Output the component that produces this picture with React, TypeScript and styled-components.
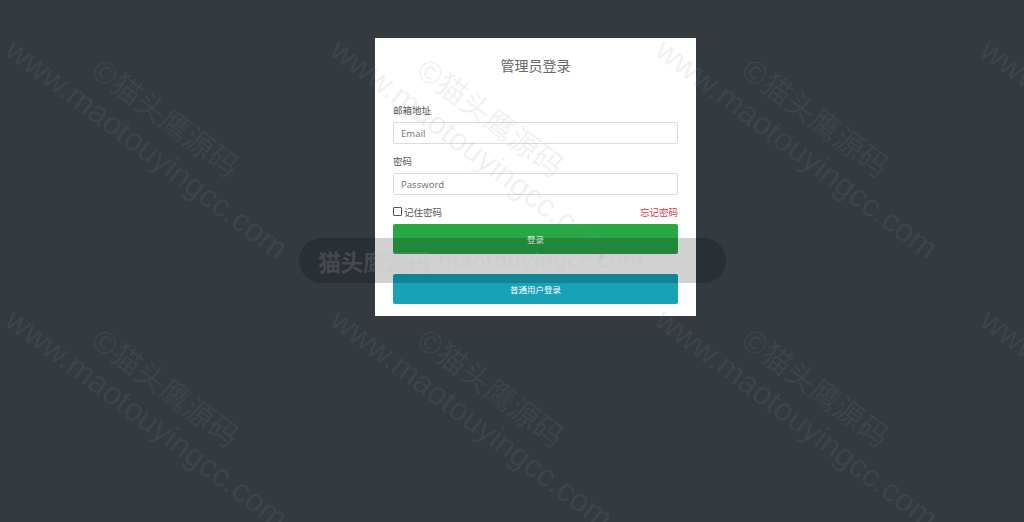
import React from 'react'
import styled, { createGlobalStyle } from 'styled-components'

const GlobalStyle = createGlobalStyle`
html, body {
    margin: 0;
    padding: 0;
    background: #343a40;
}
body {
    font-family: "Noto Sans CJK SC", "Noto Sans", sans-serif;
}
`

const Page = styled.div`
position: relative;
width: 1024px;
height: 522px;
overflow: hidden;
background: #343a40;
padding: 38px 0 0 375px;
box-sizing: border-box;
`

const Card = styled.div`
width: 321px;
background: #fff;
padding: 16px 18px 12px;
box-sizing: border-box;
display: flex;
flex-direction: column;
`

const Title = styled.h4`
margin: 0 0 26px;
text-align: center;
font-size: 14px;
font-weight: 400;
line-height: 23px;
color: #666;
`

const Field = styled.div<{ $gap: number }>`
display: flex;
flex-direction: column;
gap: 4px;
margin-bottom: ${p => p.$gap}px;
`

const Label = styled.label`
font-size: 9.5px;
line-height: 15px;
color: #555;
`

const Input = styled.input`
height: 22px;
box-sizing: border-box;
border: 1px solid #dcdcdc;
border-radius: 2px;
padding: 0 7px;
font-family: "Noto Sans", "Noto Sans CJK SC", sans-serif;
font-size: 9.5px;
color: #555;
outline: none;
&::placeholder {
    color: #7a7a7a;
}
`

const OptionsRow = styled.div`
display: flex;
justify-content: space-between;
align-items: center;
height: 15px;
margin-bottom: 5px;
font-size: 9.5px;
`

const Remember = styled.label`
display: flex;
align-items: center;
gap: 2px;
color: #555;
`

const Box = styled.span`
width: 7px;
height: 7px;
border: 1px solid #555;
border-radius: 1px;
background: #fff;
`

const Forgot = styled.a`
color: #dc3545;
text-decoration: none;
`

const Button = styled.button<{ $tone: string }>`
height: 30px;
border: none;
border-radius: 2px;
background: ${p => p.$tone};
color: #fff;
font-family: "Noto Sans CJK SC", sans-serif;
font-size: 8.5px;
cursor: pointer;
& + & {
    margin-top: 20px;
}
`

const Marks = styled.div`
position: absolute;
inset: 0;
pointer-events: none;
`

const Mark = styled.div`
position: absolute;
transform: rotate(37deg);
transform-origin: 0 0;
white-space: nowrap;
color: rgba(140, 140, 140, 0.13);
font-size: 32px;
line-height: 38px;
`

const MarkCn = styled.div`
padding-left: 80px;
font-family: "Noto Sans CJK SC", sans-serif;
font-size: 30px;
`

const MarkUrl = styled.div`
font-family: "Liberation Sans", Arial, sans-serif;
`

const Pill = styled.div`
position: absolute;
left: 299px;
top: 238px;
width: 427px;
height: 45px;
border-radius: 23px;
background: rgba(0, 0, 0, 0.18);
display: flex;
align-items: center;
padding-left: 19px;
box-sizing: border-box;
gap: 8px;
color: rgba(190, 190, 190, 0.2);
pointer-events: none;
`

const PillCn = styled.span`
font-family: "Noto Sans CJK SC", sans-serif;
font-size: 23px;
font-weight: 700;
letter-spacing: -0.5px;
`

const PillUrl = styled.span`
font-family: "DejaVu Sans", sans-serif;
font-size: 21px;
letter-spacing: 0.3px;
`

const tiles: { x: number; y: number }[] = []
for (let r = 0; r < 2; r++) {
    for (let c = 0; c < 4; c++) {
        tiles.push({ x: 44 + c * 325, y: 0 + r * 270 })
    }
}

export default function App() {
    return (
        <>
            <GlobalStyle />
            <Page>
                <Card>
                    <Title>管理员登录</Title>
                    <Field $gap={10}>
                        <Label>邮箱地址</Label>
                        <Input placeholder="Email" />
                    </Field>
                    <Field $gap={9}>
                        <Label>密码</Label>
                        <Input type="password" placeholder="Password" />
                    </Field>
                    <OptionsRow>
                        <Remember><Box />记住密码</Remember>
                        <Forgot href="#">忘记密码</Forgot>
                    </OptionsRow>
                    <Button $tone="#28a745">登录</Button>
                    <Button $tone="#17a2b8">普通用户登录</Button>
                </Card>
                <Marks>
                    {tiles.map((t, i) => (
                        <Mark key={i} style={{ left: t.x, top: t.y }}>
                            <MarkCn>©猫头鹰源码</MarkCn>
                            <MarkUrl>www.maotouyingcc.com</MarkUrl>
                        </Mark>
                    ))}
                </Marks>
                <Pill>
                    <PillCn>猫头鹰源码</PillCn>
                    <PillUrl>maotouyingcc.com</PillUrl>
                </Pill>
            </Page>
        </>
    )
}
